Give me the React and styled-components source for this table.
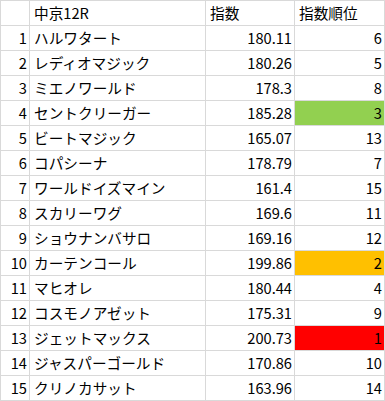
import React from "react";
import styled, { createGlobalStyle } from "styled-components";

const Global = createGlobalStyle`
  html, body { margin: 0; padding: 0; background: #fff; }
  body { font-family: "Noto Sans CJK JP", "Noto Sans", sans-serif; }
`;

const Sheet = styled.div`
  display: grid;
  grid-template-columns: 29px 176px 89px 90px;
  grid-auto-rows: 25px;
  width: 384px;
  border-top: 1px solid #d9d9d9;
  border-left: 1px solid #d9d9d9;
  font-family: "Noto Sans CJK JP", "Noto Sans", sans-serif;
  font-size: 14.67px;
  color: #000;
`;

const Cell = styled.div`
  box-sizing: border-box;
  border-right: 1px solid #d9d9d9;
  border-bottom: 1px solid #d9d9d9;
  display: flex;
  align-items: flex-end;
  justify-content: ${(p) => (p.$align === "right" ? "flex-end" : "flex-start")};
  padding: 0 ${(p) => (p.$align === "right" ? "2px" : "0")} 3px
    ${(p) => (p.$align === "right" ? "0" : "4px")};
  background: ${(p) => p.$fill || "transparent"};
  line-height: 18px;
  white-space: nowrap;
  overflow: hidden;
`;

const rows = [
  ["ハルワタート", "180.11", 6],
  ["レディオマジック", "180.26", 5],
  ["ミエノワールド", "178.3", 8],
  ["セントクリーガー", "185.28", 3],
  ["ビートマジック", "165.07", 13],
  ["コパシーナ", "178.79", 7],
  ["ワールドイズマイン", "161.4", 15],
  ["スカリーワグ", "169.6", 11],
  ["ショウナンバサロ", "169.16", 12],
  ["カーテンコール", "199.86", 2],
  ["マヒオレ", "180.44", 4],
  ["コスモノアゼット", "175.31", 9],
  ["ジェットマックス", "200.73", 1],
  ["ジャスパーゴールド", "170.86", 10],
  ["クリノカサット", "163.96", 14],
];

const fills = { 1: "#ff0000", 2: "#ffc000", 3: "#92d050" };

export default function App() {
  return (
    <>
      <Global />
      <Sheet>
        <Cell />
        <Cell>中京12R</Cell>
        <Cell>指数</Cell>
        <Cell>指数順位</Cell>
        {rows.map(([name, idx, rank], i) => (
          <React.Fragment key={i}>
            <Cell $align="right">{i + 1}</Cell>
            <Cell>{name}</Cell>
            <Cell $align="right">{idx}</Cell>
            <Cell $align="right" $fill={fills[rank]}>
              {rank}
            </Cell>
          </React.Fragment>
        ))}
      </Sheet>
    </>
  );
}
